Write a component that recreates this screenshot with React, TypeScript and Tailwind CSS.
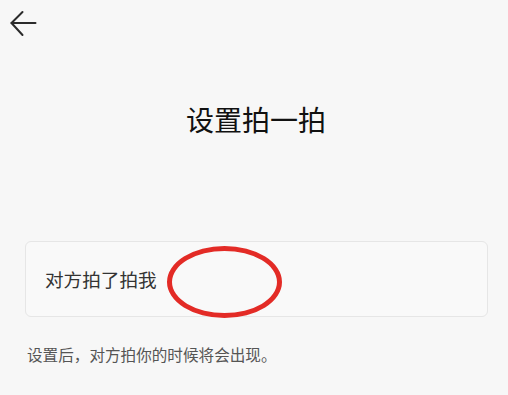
export default function App() {
  return (
    <div
      className="min-h-screen w-full bg-[#f7f7f7]"
      style={{ fontFamily: '"Noto Sans CJK SC", "Noto Sans", sans-serif' }}
    >
      {/* Header */}
      <div className="pl-[10px] pt-[10px] h-[38px]">
        <svg width="28" height="28" viewBox="0 0 28 28" fill="none" stroke="#2b2b2b" strokeWidth="2" strokeLinecap="round" strokeLinejoin="round">
          <path d="M1.5 13H25.5" />
          <path d="M12.5 2L1.5 13L12.5 25" />
        </svg>
      </div>

      {/* Title */}
      <h1 className="mt-[61px] pl-[4px] text-center text-[28px] leading-[40px] text-[#111111] font-normal">设置拍一拍</h1>

      {/* Input card */}
      <div className="relative mt-[102px] ml-[25px] mr-[20px] h-[76px] rounded-[6px] border border-[#e6e6e6] bg-[#f9f9f9] flex items-center pl-[19px]">
        <span className="text-[18.6px] leading-[26px] text-[#333333]">对方拍了拍我</span>
        <div className="absolute left-[141px] top-[4px] w-[115px] h-[72px] rounded-[50%] border-[5px] border-[#e32b26]" />
      </div>

      {/* Footer hint */}
      <p className="mt-[26px] pl-[27px] text-[15.6px] leading-[22px] text-[#555555]">设置后，对方拍你的时候将会出现。</p>
    </div>
  );
}
